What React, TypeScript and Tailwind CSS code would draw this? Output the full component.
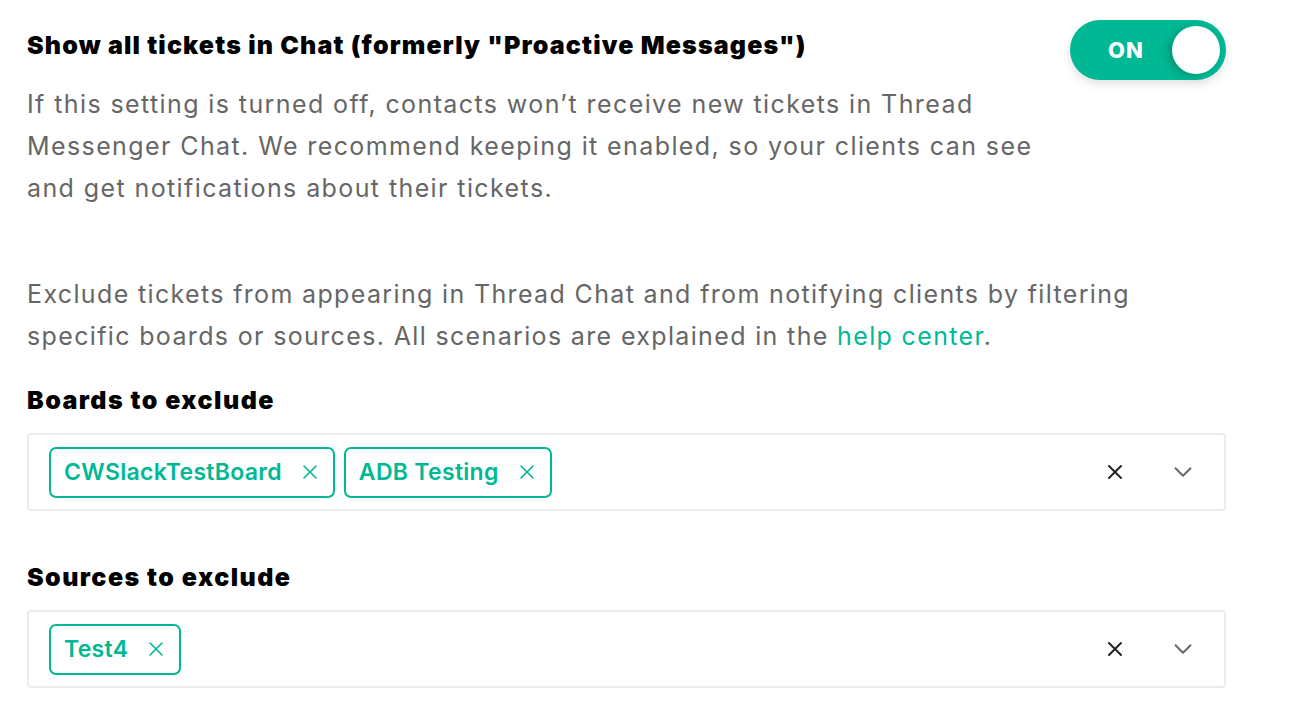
import { X, ChevronDown } from "lucide-react";

const inter = { fontFamily: "Inter, 'Noto Sans', sans-serif" };

function Tag({ label }: { label: string }) {
  return (
    <div className="flex h-[51px] items-center gap-[16px] rounded-[7px] border-2 border-[#00b894] pl-[13px] pr-[11px] text-[#00b894]">
      <span className="text-[23px] font-semibold leading-none tracking-[0.3px]">{label}</span>
      <X className="h-[24px] w-[24px]" strokeWidth={1.6} />
    </div>
  );
}

function MultiSelect({ tags }: { tags: string[] }) {
  return (
    <div className="flex h-[78px] w-[1199px] items-center rounded-[4px] border-2 border-[#ececec] pl-[20px] pr-[26px]">
      <div className="flex flex-1 items-center gap-[9px]">
        {tags.map((t) => (
          <Tag key={t} label={t} />
        ))}
      </div>
      <X className="h-[24px] w-[24px] text-[#222]" strokeWidth={2} />
      <ChevronDown className="ml-[41px] h-[30px] w-[30px] text-[#666]" strokeWidth={1.5} />
    </div>
  );
}

export default function App() {
  return (
    <div className="min-h-screen bg-white pl-[27px] pt-[20px]" style={inter}>
      <div className="flex w-[1199px] items-start justify-between">
        <div className="w-[1030px]">
          <h2 className="mt-[9px] text-[25px] font-black leading-[32px] tracking-[1.15px] text-black">
            Show all tickets in Chat (formerly "Proactive Messages")
          </h2>
          <p className="mt-[22px] text-[25px] leading-[42px] tracking-[1.4px] text-[#666]">
            If this setting is turned off, contacts won’t receive new tickets in Thread Messenger
            Chat. We recommend keeping it enabled, so your clients can see and get notifications
            about their tickets.
          </p>
        </div>
        <div className="flex h-[60px] w-[156px] shrink-0 items-center justify-between rounded-full bg-[#00b894] pl-[38px] pr-[6px] shadow-[0_4px_10px_rgba(0,0,0,0.12)]">
          <span className="text-[22px] font-extrabold tracking-[1px] text-white">ON</span>
          <span className="h-[48px] w-[48px] rounded-full bg-white shadow-[-4px_2px_8px_rgba(0,0,0,0.2)]" />
        </div>
      </div>

      <p className="mt-[64px] w-[1160px] text-[25px] leading-[42px] tracking-[1.35px] text-[#666]">
        Exclude tickets from appearing in Thread Chat and from notifying clients by filtering
        specific boards or sources. All scenarios are explained in the{" "}
        <a href="#" className="text-[#00b894]">
          help center
        </a>
        .
      </p>

      <h3 className="mt-[27px] text-[25px] font-black leading-[32px] tracking-[1.45px] text-black">
        Boards to exclude
      </h3>
      <div className="mt-[17px]">
        <MultiSelect tags={["CWSlackTestBoard", "ADB Testing"]} />
      </div>

      <h3 className="mt-[50px] text-[25px] font-black leading-[32px] tracking-[1.45px] text-black">
        Sources to exclude
      </h3>
      <div className="mt-[17px]">
        <MultiSelect tags={["Test4"]} />
      </div>
    </div>
  );
}
